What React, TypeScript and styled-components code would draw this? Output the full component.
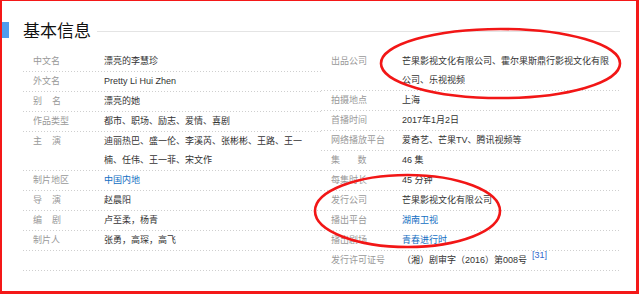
import React from "react";
import styled, { createGlobalStyle } from "styled-components";

const GlobalStyle = createGlobalStyle`
  html, body { margin: 0; padding: 0; background: #fff; }
  body { font-family: "Liberation Sans", "Noto Sans CJK SC", sans-serif; }
`;

const Frame = styled.div`
  position: relative;
  box-sizing: border-box;
  width: 639px;
  height: 294px;
  border-style: solid;
  border-color: #f41818;
  border-width: 1px 3px 3px 2px;
  background: #fff;
  overflow: hidden;
`;

const Header = styled.div`
  display: flex;
  align-items: center;
  height: 16px;
  margin-top: 21px;
  margin-right: 16px;
`;

const Bar = styled.span`
  flex: none;
  width: 7px;
  height: 16px;
  background: #4f9cee;
`;

const Title = styled.h2`
  margin: 0 0 0 14px;
  font-family: "Noto Sans CJK SC", sans-serif;
  font-size: 17px;
  font-weight: 400;
  line-height: 16px;
  color: #111;
`;

const Rule = styled.span`
  flex: 1;
  align-self: flex-end;
  height: 1px;
  margin: 0 0 6px 6px;
  background: #e4e4e4;
`;

const Body = styled.div`
  display: flex;
  margin: 14px 0 0 21px;
`;

const Column = styled.dl<{ $width: number }>`
  margin: 0;
  width: ${(p) => p.$width}px;
  display: flex;
  flex-direction: column;
`;

const Row = styled.div<{ $label: number; $value: number }>`
  display: grid;
  grid-template-columns: ${(p) => p.$label}px ${(p) => p.$value}px;
  padding-bottom: 1px;
  background-image: linear-gradient(to right, #cfcfcf 1px, transparent 1px);
  background-size: 3px 1px;
  background-repeat: repeat-x;
  background-position: left bottom;
  font-size: 9px;
  line-height: 19px;
`;

const Label = styled.dt`
  margin: 0;
  padding-left: 10px;
  color: #999;
  white-space: pre;
`;

const Value = styled.dd`
  margin: 0;
  color: #333;
  word-break: break-all;
`;

const Link = styled.a`
  color: #136ec2;
  text-decoration: none;
`;

const Ref = styled.sup`
  margin-left: 5px;
  color: #3366cc;
  font-size: 9px;
  line-height: 0;
  vertical-align: 5px;
`;

const Marks = styled.svg`
  position: absolute;
  left: -2px;
  top: -1px;
  width: 640px;
  height: 294px;
  pointer-events: none;
`;

type Item = { label: string; value: React.ReactNode };

const left: Item[] = [
  { label: "中文名", value: "漂亮的李慧珍" },
  { label: "外文名", value: "Pretty Li Hui Zhen" },
  { label: "别\u00a0\u00a0\u00a0\u00a0名", value: "漂亮的她" },
  { label: "作品类型", value: "都市、职场、励志、爱情、喜剧" },
  { label: "主\u00a0\u00a0\u00a0\u00a0演", value: "迪丽热巴、盛一伦、李溪芮、张彬彬、王路、王一楠、任伟、王一菲、宋文作" },
  { label: "制片地区", value: <Link>中国内地</Link> },
  { label: "导\u00a0\u00a0\u00a0\u00a0演", value: "赵晨阳" },
  { label: "编\u00a0\u00a0\u00a0\u00a0剧", value: "卢至柔，杨青" },
  { label: "制片人", value: "张勇，高琛，高飞" },
  { label: "", value: "\u00a0" },
];

const right: Item[] = [
  { label: "出品公司", value: "芒果影视文化有限公司、霍尔果斯鼎行影视文化有限公司、乐视视频" },
  { label: "拍摄地点", value: "上海" },
  { label: "首播时间", value: "2017年1月2日" },
  { label: "网络播放平台", value: "爱奇艺、芒果TV、腾讯视频等" },
  { label: "集\u00a0\u00a0\u00a0\u00a0\u00a0\u00a0\u00a0数", value: "46 集" },
  { label: "每集时长", value: "45 分钟" },
  { label: "发行公司", value: "芒果影视文化有限公司" },
  { label: "播出平台", value: <Link>湖南卫视</Link> },
  { label: "播出剧场", value: <Link>青春进行时</Link> },
  {
    label: "发行许可证号",
    value: (
      <>
        （湘）剧审字（2016）第008号<Ref>[31]</Ref>
      </>
    ),
  },
];

export default function App() {
  return (
    <>
      <GlobalStyle />
      <Frame>
        <Header>
          <Bar />
          <Title>基本信息</Title>
          <Rule />
        </Header>
        <Body>
          <Column $width={298}>
            {left.map((it, i) => (
              <Row key={i} $label={81} $value={204}>
                <Label>{it.label}</Label>
                <Value>{it.value}</Value>
              </Row>
            ))}
          </Column>
          <Column $width={299}>
            {right.map((it, i) => (
              <Row key={i} $label={81} $value={213}>
                <Label>{it.label}</Label>
                <Value>{it.value}</Value>
              </Row>
            ))}
          </Column>
        </Body>
        <Marks viewBox="0 0 640 294">
          <ellipse cx="500.5" cy="63.5" rx="119.5" ry="34.5" fill="none" stroke="#f21616" strokeWidth="2.6" />
          <ellipse cx="407.5" cy="211" rx="92.5" ry="36" fill="none" stroke="#f21616" strokeWidth="2.6" />
        </Marks>
      </Frame>
    </>
  );
}
